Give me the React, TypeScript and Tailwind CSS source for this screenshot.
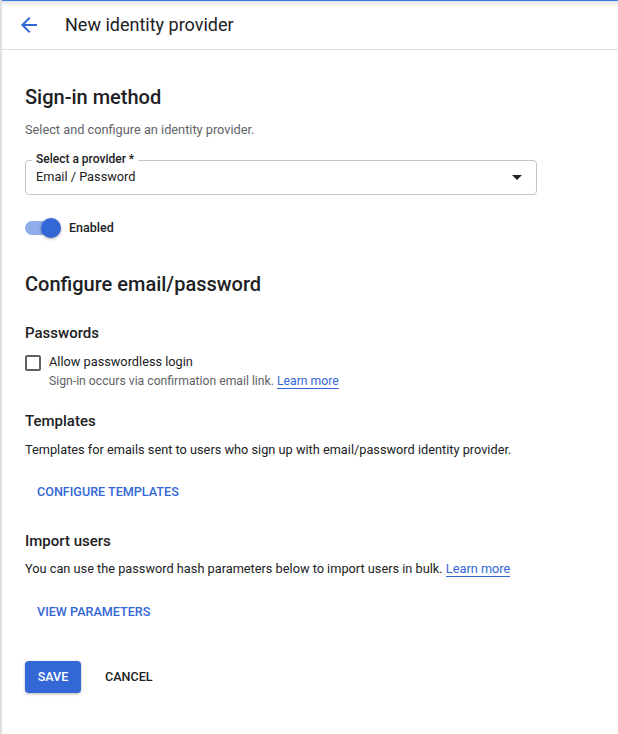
import React from "react";

export default function App() {
  return (
    <div
      className="relative w-[618px] h-[734px] bg-white border-l-2 border-[#e0e0e0] overflow-hidden text-[#202124]"
      style={{ fontFamily: "Roboto, 'Liberation Sans', sans-serif" }}
    >
      <div className="absolute left-0 right-0 top-0 h-[1px] bg-[#3b78e7]" />
      <div className="absolute left-0 right-0 top-[1px] h-[6px] bg-gradient-to-b from-[#e4e4e4] to-white" />
      {/* header */}
      <div className="h-[50px] flex items-center border-b border-[#dadce0]">
        <svg width="24" height="24" viewBox="0 0 24 24" className="ml-[15px] mr-[24px] text-[#3367d6]" fill="currentColor">
          <path d="M20 11H7.83l5.59-5.59L12 4l-8 8 8 8 1.41-1.41L7.83 13H20v-2z" />
        </svg>
        <div className="text-[18px] text-[#202124]">New identity provider</div>
      </div>

      <div className="pl-[23px] pr-[60px]">
        <div className="mt-[34px] text-[20px] font-medium leading-[26px]">Sign-in method</div>
        <div className="mt-[11px] text-[12.75px] text-[#5f6368] leading-[18px]">Select and configure an identity provider.</div>

        {/* select */}
        <div className="relative mt-[21px] w-[512px] h-[35px] border border-[#c6c6c6] rounded-[4px] flex items-center">
          <div className="absolute -top-[10px] left-[6px] bg-white px-[4px] text-[12px] leading-[16px] font-medium text-[#202124]">
            Select a provider *
          </div>
          <div className="pl-[10px] pb-[1px] text-[12.75px] leading-[18px]">Email / Password</div>
          <div className="ml-auto mr-[14px] w-0 h-0 border-l-[5px] border-r-[5px] border-t-[5px] border-l-transparent border-r-transparent border-t-[#202124]" />
        </div>

        {/* toggle */}
        <div className="mt-[23px] flex items-center">
          <div className="relative w-[36px] h-[20px] flex items-center">
            <div className="w-[34px] h-[14px] rounded-full bg-[#8fadeb]" />
            <div className="absolute left-[16px] top-0 w-[20px] h-[20px] rounded-full bg-[#3367d6] shadow-[0_1px_3px_rgba(0,0,0,0.35)]" />
          </div>
          <div className="ml-[8px] text-[12.5px] font-medium leading-[16px]">Enabled</div>
        </div>

        <div className="mt-[33px] text-[20px] font-medium leading-[26px]">Configure email/password</div>

        <div className="mt-[26px] text-[15px] font-medium leading-[20px]">Passwords</div>
        <div className="mt-[10px] flex">
          <div className="w-[16px] h-[16px] border-2 border-[#5f6368] rounded-[2px] mt-[2px]" />
          <div className="ml-[8px]">
            <div className="text-[12.75px] leading-[18px]">Allow passwordless login</div>
            <div className="mt-[2px] text-[12.2px] leading-[16px] text-[#5f6368]">
              Sign-in occurs via confirmation email link.{" "}
              <span className="text-[#3367d6] border-b border-[#3367d6]">Learn more</span>
            </div>
          </div>
        </div>

        <div className="mt-[22px] text-[15px] font-medium leading-[20px]">Templates</div>
        <div className="mt-[10px] text-[12.75px] leading-[18px] whitespace-nowrap">
          Templates for emails sent to users who sign up with email/password identity provider.
        </div>
        <div className="mt-[25px] ml-[12px] text-[12.6px] font-medium leading-[16px] text-[#3367d6]">CONFIGURE TEMPLATES</div>

        <div className="mt-[31px] text-[15px] font-medium leading-[20px]">Import users</div>
        <div className="mt-[9px] text-[12.75px] leading-[18px] whitespace-nowrap">
          You can use the password hash parameters below to import users in bulk.{" "}
          <span className="text-[#3367d6] border-b border-[#3367d6]">Learn more</span>
        </div>
        <div className="mt-[26px] ml-[12px] text-[12.6px] font-medium leading-[16px] text-[#3367d6]">VIEW PARAMETERS</div>

        <div className="mt-[41px] flex items-center">
          <div className="w-[56px] h-[32px] rounded-[4px] bg-[#3367d6] text-white text-[12.6px] font-medium flex items-center justify-center shadow-[0_1px_3px_rgba(0,0,0,0.3)]">
            SAVE
          </div>
          <div className="ml-[24px] text-[12.6px] font-medium text-[#202124]">CANCEL</div>
        </div>
      </div>
    </div>
  );
}
